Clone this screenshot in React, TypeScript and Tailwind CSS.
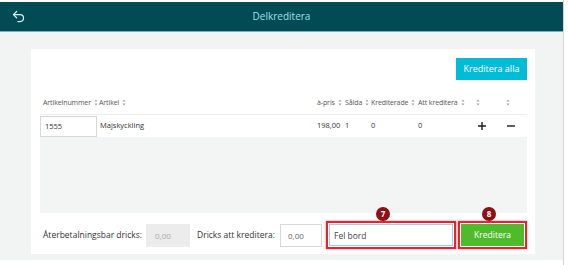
import React from 'react';
import { Undo2 } from 'lucide-react';

function SortIcon() {
  return (
    <svg width="4" height="7" viewBox="0 0 4 7" className="inline-block ml-[3px] align-middle">
      <path d="M2 0.5 3.5 2.5H0.5z" fill="#9ca3a6" />
      <path d="M2 6.5 3.5 4.5H0.5z" fill="#9ca3a6" />
    </svg>
  );
}

function Badge({ n, left }: { n: string; left: string }) {
  return (
    <span
      className={`absolute top-[-16px] ${left} w-[14px] h-[14px] rounded-full bg-[#8e1015] text-white text-[8px] font-bold leading-[14px] text-center`}
    >
      {n}
    </span>
  );
}

const cols = 'grid grid-cols-[59px_218px_28px_26px_47px_54px_28px_27px] whitespace-nowrap';

export default function App() {
  return (
    <div
      className="w-[568px] h-[265px] flex bg-white overflow-hidden text-[#333]"
      style={{ fontFamily: '"Open Sans", "Noto Sans", sans-serif' }}
    >
      <div className="w-[564px] flex flex-col pt-[2px] border-r border-[#d4d6d6]">
        <header className="h-[30px] bg-[#024b55] flex items-center relative border-b border-[#7ab3b5]">
          <Undo2 className="ml-[11px] w-[15px] h-[15px] text-[#d4eef0]" strokeWidth={2} />
          <span className="absolute left-0 right-0 text-center text-[10px] text-[#9fe0e3] pointer-events-none">
            Delkreditera
          </span>
        </header>

        <main className="flex-1 bg-[#f2f3f3] pt-[17px] pl-[31px]">
          <div className="w-[504px] h-[205px] bg-white flex flex-col pl-[9px] pr-[8px] pt-[9px]">
            <div className="flex justify-end">
              <button className="w-[71px] h-[22px] bg-[#00bcd6] text-white text-[9px]">
                Kreditera alla
              </button>
            </div>

            <div className={`${cols} mt-[12px] text-[7px] tracking-[-0.1px] text-[#555] h-[23px] items-center border-b border-[#eceeee]`}>
              <div className="pl-[3px]">Artikelnummer<SortIcon /></div>
              <div>Artikel<SortIcon /></div>
              <div>à-pris<SortIcon /></div>
              <div>Sålda<SortIcon /></div>
              <div>Krediterade<SortIcon /></div>
              <div>Att kreditera<SortIcon /></div>
              <div className="pl-[1px]"><SortIcon /></div>
              <div className="pl-[3px]"><SortIcon /></div>
            </div>

            <div className={`${cols} text-[7.5px] h-[22px] items-center`}>
              <div>
                <input
                  defaultValue="1555"
                  className="w-[57px] h-[21px] border border-[#d7d9d9] px-[4px] text-[7.5px] text-[#333] outline-none"
                />
              </div>
              <div className="pl-[1px]">Majskyckling</div>
              <div>198,00</div>
              <div>1</div>
              <div>0</div>
              <div>0</div>
              <div className="pl-[6px]">
                <svg width="8" height="8" viewBox="0 0 8 8">
                  <path d="M4 0v8M0 4h8" stroke="#1a1a1a" strokeWidth="1.4" />
                </svg>
              </div>
              <div className="pl-[7px]">
                <svg width="8" height="8" viewBox="0 0 8 8">
                  <path d="M0 4h8" stroke="#1a1a1a" strokeWidth="1.4" />
                </svg>
              </div>
            </div>

            <div className="h-[76px] bg-[#f3f4f4]" />

            <div className="mt-[8px] flex items-center text-[8.5px] whitespace-nowrap">
              <span className="w-[106px] shrink-0 pl-[3px]">Återbetalningsbar dricks:</span>
              <input
                disabled
                defaultValue="0,00"
                className="w-[44px] shrink-0 h-[23px] bg-[#ececec] px-[9px] text-[8px] text-[#aaa]"
              />
              <span className="w-[90px] shrink-0 pl-[7px]">Dricks att kreditera:</span>
              <input
                defaultValue="0,00"
                className="w-[42px] shrink-0 h-[23px] border border-[#d7d9d9] px-[7px] text-[8px] text-[#666] outline-none"
              />
              <div className="relative shrink-0 ml-[4px] w-[130px] h-[28px] border-2 border-[#e8232f] p-[1px] shadow-[0_0_2px_rgba(232,35,47,0.6)]">
                <Badge n="7" left="left-[48px]" />
                <input
                  defaultValue="Fel bord"
                  className="w-full h-full border border-[#8fd6e6] px-[4px] text-[8.5px] text-[#444] outline-none"
                />
              </div>
              <div className="relative shrink-0 ml-[2px] w-[69px] h-[28px] border-2 border-[#e8232f] p-[1px] shadow-[0_0_2px_rgba(232,35,47,0.6)]">
                <Badge n="8" left="left-[22px]" />
                <button className="w-full h-full bg-[#4dbb2b] text-white text-[8.5px]">Kreditera</button>
              </div>
            </div>
          </div>
        </main>
        <div className="h-[5px] bg-white" />
      </div>
      <div className="flex-1 bg-white" />
    </div>
  );
}
